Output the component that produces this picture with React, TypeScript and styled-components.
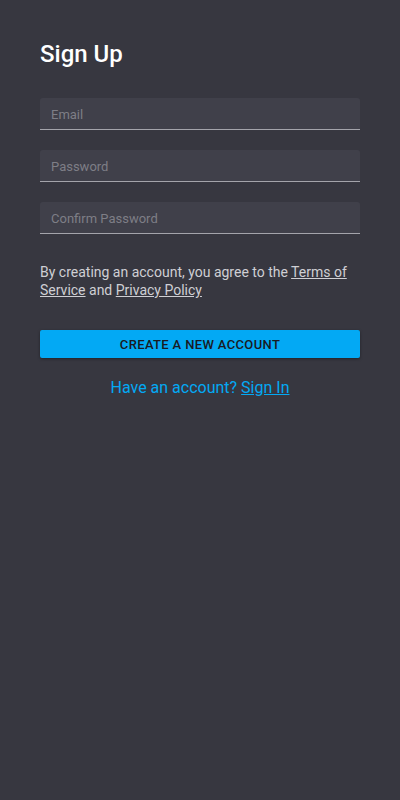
import React from "react";
import styled, { createGlobalStyle } from "styled-components";

const Global = createGlobalStyle`
  html, body { margin: 0; padding: 0; background: #373740; }
  body { font-family: Roboto, "Liberation Sans", sans-serif; }
  * { box-sizing: border-box; }
`;

const Page = styled.div`
  min-height: 800px;
  background: #373740;
  padding: 38px 40px 0;
  display: flex;
  flex-direction: column;
`;

const Title = styled.h1`
  margin: 0 0 28px;
  font-size: 24px;
  font-weight: 500;
  line-height: 32px;
  color: #ffffff;
`;

const Fields = styled.div`
  display: flex;
  flex-direction: column;
  gap: 20px;
`;

const Field = styled.input`
  display: block;
  width: 100%;
  height: 32px;
  border: none;
  border-bottom: 1px solid #a4a4ab;
  border-radius: 3px 3px 0 0;
  background: #40404a;
  padding: 1px 11px 0;
  font-family: Roboto, "Liberation Sans", sans-serif;
  font-size: 13px;
  color: #e0e0e0;
  outline: none;
  &::placeholder { color: #7e7e86; }
`;

const Terms = styled.p`
  margin: 29px 0 0;
  font-size: 14px;
  line-height: 18px;
  color: #cfcfd4;
`;

const TermsLink = styled.a`
  color: #cfcfd4;
  text-decoration: underline;
`;

const Primary = styled.button`
  margin-top: 31px;
  height: 28px;
  width: 100%;
  border: none;
  border-radius: 2px;
  background: #03a9f4;
  color: #1a1a22;
  font-family: Roboto, "Liberation Sans", sans-serif;
  font-size: 13px;
  font-weight: 500;
  letter-spacing: 0.35px;
  box-shadow: 0 1px 3px rgba(0,0,0,0.4);
  cursor: pointer;
`;

const SignInLine = styled.p`
  margin: 20px 0 0;
  text-align: center;
  font-size: 16px;
  line-height: 20px;
  color: #03a9f4;
`;

const SignInLink = styled.a`
  color: #03a9f4;
  text-decoration: underline;
`;

export default function App() {
  return (
    <>
      <Global />
      <Page>
        <Title>Sign Up</Title>
        <Fields>
          <Field type="email" placeholder="Email" />
          <Field type="password" placeholder="Password" />
          <Field type="password" placeholder="Confirm Password" />
        </Fields>
        <Terms>
          By creating an account, you agree to the <TermsLink href="#">Terms of Service</TermsLink> and{" "}
          <TermsLink href="#">Privacy Policy</TermsLink>
        </Terms>
        <Primary>CREATE A NEW ACCOUNT</Primary>
        <SignInLine>
          Have an account? <SignInLink href="#">Sign In</SignInLink>
        </SignInLine>
      </Page>
    </>
  );
}
